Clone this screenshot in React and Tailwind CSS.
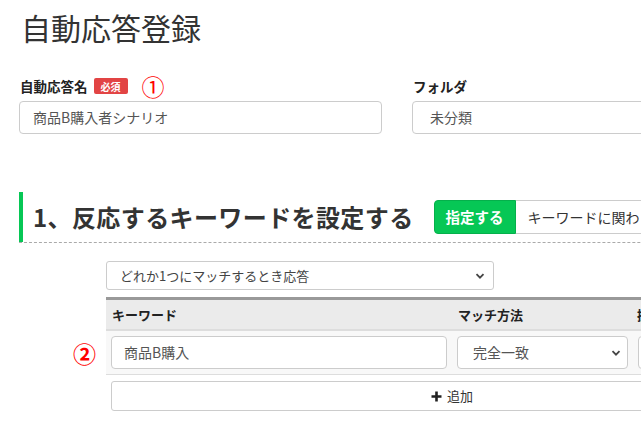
const font = { fontFamily: '"Noto Sans CJK JP", "Noto Sans", sans-serif' };

const Chevron = () => (
	<svg width="10" height="10" viewBox="0 0 10 10" className="shrink-0">
		<path d="M1.5 3.2 L5 6.7 L8.5 3.2" fill="none" stroke="#444" strokeWidth="1.8" />
	</svg>
);

export default function App() {
	return (
		<div
			className="relative h-[426px] w-[641px] overflow-hidden bg-white text-[#333]"
			style={font}
		>
			<div className="w-[760px]">
				<h1 className="mt-[7px] pl-[21px] text-[30px] leading-[40px] font-normal text-[#333]">
					自動応答登録
				</h1>

				<div className="mt-[29px] flex gap-[30px] pl-[19px]">
					<div className="w-[363px]">
						<div className="flex h-[20px] items-center">
							<span className="pl-[1px] text-[13.5px] font-bold text-[#222]">自動応答名</span>
							<span className="ml-[6px] flex h-[16px] w-[34px] items-center justify-center rounded-[2px] bg-[#e24444] text-[10px] font-bold text-white">
								必須
							</span>
							<span className="ml-[14px] text-[23px] leading-none text-[#ff0000]">①</span>
						</div>
						<div className="mt-[5px] flex h-[33px] items-center rounded-[4px] border border-[#cccccc] px-[13px] text-[14px] text-[#555]">
							商品B購入者シナリオ
						</div>
					</div>
					<div className="w-[330px]">
						<div className="flex h-[20px] items-center pl-[1px] text-[13.5px] font-bold text-[#222]">
							フォルダ
						</div>
						<div className="mt-[5px] flex h-[33px] items-center rounded-[4px] border border-[#cccccc] px-[17px] text-[14px] text-[#555]">
							未分類
						</div>
					</div>
				</div>

				<div className="mt-[58px] ml-[19px] flex h-[51px] items-center border-b border-dashed border-[#aaaaaa]">
					<div className="flex h-full items-center border-l-[4px] border-[#06c755] pl-[10px]">
						<h2 className="text-[24px] font-bold tracking-[0.4px] text-[#333]">
							1、反応するキーワードを設定する
						</h2>
					</div>
					<div className="ml-[20px] flex h-[34px]">
						<div className="flex w-[82px] items-center justify-center rounded-l-[4px] border border-[#05b04b] bg-[#06c755] text-[14.5px] font-bold text-white">
							指定する
						</div>
						<div className="flex items-center border-y border-r border-[#cccccc] px-[12px] text-[14px] text-[#333]">
							キーワードに関わらず応答
						</div>
					</div>
				</div>

				<div className="ml-[106px]">
					<div className="mt-[18px] flex h-[29px] w-[388px] items-center justify-between rounded-[3px] border border-[#cccccc] pr-[8px] pl-[13px] text-[13px] text-[#444]">
						<span>どれか1つにマッチするとき応答</span>
						<Chevron />
					</div>

					<div className="relative mt-[7px] border-t-[3px] border-[#999999]">
						<div className="flex h-[31px] items-center border-b-[2px] border-[#dddddd] bg-[#ebebeb] text-[13px] font-bold text-[#222]">
							<div className="w-[346px] pl-[6px]">キーワード</div>
							<div className="w-[180px] pl-[6px]">マッチ方法</div>
							<div className="pl-[5px]">操作</div>
						</div>
						<div className="relative flex h-[44px] items-center gap-[10px] border-b border-[#dddddd] bg-[#f8f8f8] pl-[5px]">
							<span className="absolute top-[11px] left-[-33px] text-[23px] leading-none font-bold text-[#ff0000]">②</span>
							<div className="flex h-[33px] w-[336px] items-center rounded-[4px] border border-[#cccccc] bg-white px-[12px] text-[14px] text-[#555]">
								商品B購入
							</div>
							<div className="flex h-[33px] w-[171px] items-center justify-between rounded-[4px] border border-[#cccccc] bg-white pr-[6px] pl-[15px] text-[14px] text-[#555]">
								<span>完全一致</span>
								<Chevron />
							</div>
							<div className="h-[33px] w-[60px] rounded-[4px] border border-[#cccccc] bg-white" />
						</div>
						<div className="mt-[6px] ml-[5px] flex h-[30px] w-[682px] items-center justify-center rounded-[3px] border border-[#cccccc] bg-white text-[13px] text-[#333]">
							<svg width="11" height="11" viewBox="0 0 11 11" className="mr-[5px]">
								<path d="M5.5 0.5 V10.5 M0.5 5.5 H10.5" stroke="#222" strokeWidth="2.6" />
							</svg>
							追加
						</div>
					</div>
				</div>
			</div>
		</div>
	);
}
